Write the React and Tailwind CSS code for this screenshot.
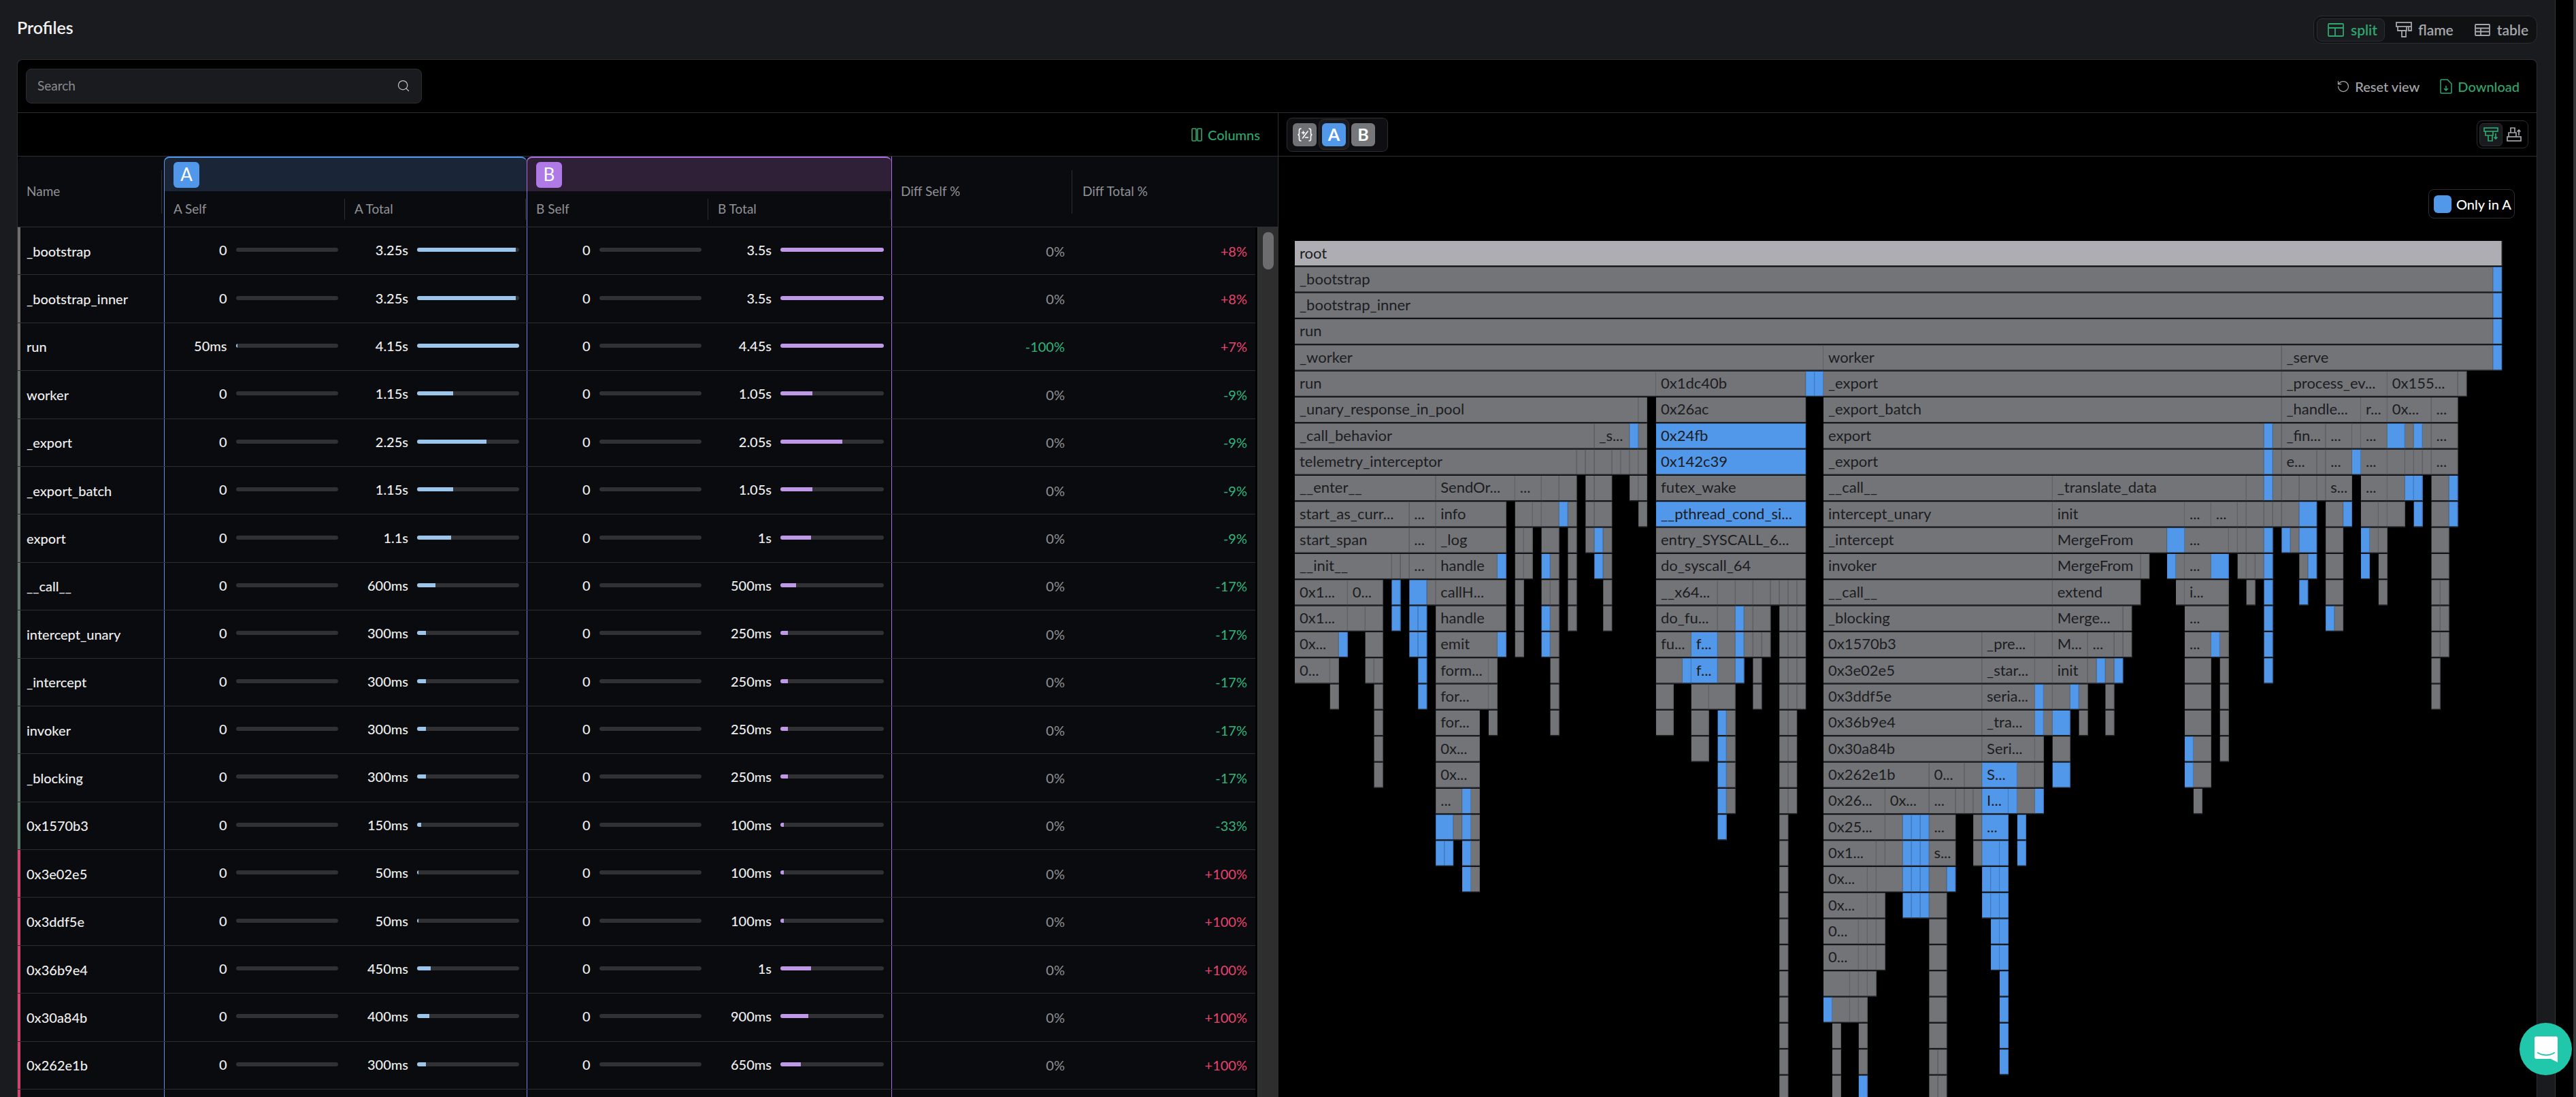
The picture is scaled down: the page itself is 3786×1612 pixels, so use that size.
import { Search, RotateCcw } from 'lucide-react';

const rows = [
  ['_bootstrap', '0', 0, '3.25s', 96.5, '3.5s', 100, '0%', '+8%', '#6f6d6e'],
  ['_bootstrap_inner', '0', 0, '3.25s', 96.5, '3.5s', 100, '0%', '+8%', '#6f6d6e'],
  ['run', '50ms', 1.5, '4.15s', 100, '4.45s', 100, '-100%', '+7%', '#6f6d6e'],
  ['worker', '0', 0, '1.15s', 35, '1.05s', 31, '0%', '-9%', '#69736e'],
  ['_export', '0', 0, '2.25s', 68, '2.05s', 60, '0%', '-9%', '#69736e'],
  ['_export_batch', '0', 0, '1.15s', 35, '1.05s', 31, '0%', '-9%', '#69736e'],
  ['export', '0', 0, '1.1s', 33, '1s', 29.5, '0%', '-9%', '#69736e'],
  ['__call__', '0', 0, '600ms', 18, '500ms', 15, '0%', '-17%', '#657870'],
  ['intercept_unary', '0', 0, '300ms', 8.5, '250ms', 7.5, '0%', '-17%', '#657870'],
  ['_intercept', '0', 0, '300ms', 8.5, '250ms', 7.5, '0%', '-17%', '#657870'],
  ['invoker', '0', 0, '300ms', 8.5, '250ms', 7.5, '0%', '-17%', '#657870'],
  ['_blocking', '0', 0, '300ms', 8.5, '250ms', 7.5, '0%', '-17%', '#657870'],
  ['0x1570b3', '0', 0, '150ms', 4, '100ms', 3.5, '0%', '-33%', '#5f7f70'],
  ['0x3e02e5', '0', 0, '50ms', 1.2, '100ms', 3.5, '0%', '+100%', '#d0456f'],
  ['0x3ddf5e', '0', 0, '50ms', 1.2, '100ms', 3.5, '0%', '+100%', '#d0456f'],
  ['0x36b9e4', '0', 0, '450ms', 13, '1s', 29.5, '0%', '+100%', '#d0456f'],
  ['0x30a84b', '0', 0, '400ms', 12, '900ms', 27, '0%', '+100%', '#d0456f'],
  ['0x262e1b', '0', 0, '300ms', 8.5, '650ms', 20, '0%', '+100%', '#d0456f'],
  ['', '', 0, '', 0, '', 0, '', '', '#d0456f'],
];

// flame rows: [start, end, label, isBlue]
const flame = [
  [[0, 137, 'root']],
  [[0, 136, '_bootstrap'], [136, 137, '', 1]],
  [[0, 136, '_bootstrap_inner'], [136, 137, '', 1]],
  [[0, 136, 'run'], [136, 137, '', 1]],
  [[0, 60, '_worker'], [60, 112, 'worker'], [112, 136, '_serve'], [136, 137, '', 1]],
  [[0, 41, 'run'], [41, 58, '0x1dc40b'], [58, 59, '', 1], [59, 60, '', 1], [60, 112, '_export'], [112, 124, '_process_ev...'], [124, 132, '0x155...'], [132, 133]],
  [[0, 39, '_unary_response_in_pool'], [39, 40], [41, 58, '0x26ac'], [60, 112, '_export_batch'], [112, 121, '_handle...'], [121, 124, 'r...'], [124, 129, '0x...'], [129, 132, '...']],
  [[0, 34, '_call_behavior'], [34, 38, '_s...'], [38, 39, '', 1], [39, 40], [41, 58, '0x24fb', 1], [60, 110, 'export'], [110, 111, '', 1], [111, 112], [112, 117, '_fin...'], [117, 120, '...'], [120, 121], [121, 124, '...'], [124, 126, '', 1], [126, 127], [127, 128, '', 1], [128, 129], [129, 132, '...']],
  [[0, 32, 'telemetry_interceptor'], [32, 33], [33, 34], [34, 36], [36, 37], [37, 38], [38, 39], [39, 40], [41, 58, '0x142c39', 1], [60, 110, '_export'], [110, 111, '', 1], [111, 112], [112, 116, 'e...'], [116, 117], [117, 120, '...'], [120, 121, '', 1], [121, 124, '...'], [124, 126], [126, 127], [127, 128], [128, 129], [129, 132, '...']],
  [[0, 16, '__enter__'], [16, 25, 'SendOr...'], [25, 28, '...'], [28, 30], [30, 32], [33, 34], [34, 36], [38, 39], [39, 40], [41, 58, 'futex_wake'], [60, 86, '__call__'], [86, 108, '_translate_data'], [108, 110], [110, 111, '', 1], [111, 112], [112, 114], [114, 116], [116, 117], [117, 120, 's...'], [121, 124, '...'], [124, 126], [126, 127, '', 1], [127, 128, '', 1], [129, 131], [131, 132, '', 1]],
  [[0, 13, 'start_as_curr...'], [13, 16, '...'], [16, 24, 'info'], [25, 27], [27, 28], [28, 30], [30, 31, '', 1], [31, 32], [33, 34], [34, 36], [39, 40], [41, 58, '__pthread_cond_si...', 1], [60, 86, 'intercept_unary'], [86, 101, 'init'], [101, 104, '...'], [104, 107, '...'], [107, 108], [108, 110], [110, 111], [111, 112], [112, 114], [114, 116, '', 1], [117, 119], [119, 120, '', 1], [121, 123], [123, 124], [124, 126], [127, 128, '', 1], [129, 131], [131, 132, '', 1]],
  [[0, 13, 'start_span'], [13, 16, '...'], [16, 24, '_log'], [25, 26], [26, 27], [28, 30], [31, 32], [33, 34], [34, 35, '', 1], [35, 36], [41, 58, 'entry_SYSCALL_6...'], [60, 86, '_intercept'], [86, 99, 'MergeFrom'], [99, 101, '', 1], [101, 106, '...'], [106, 107], [107, 108], [108, 110], [110, 111, '', 1], [112, 113, '', 1], [113, 114], [114, 116, '', 1], [117, 119], [121, 122, '', 1], [122, 123], [123, 124], [129, 131]],
  [[0, 11, '__init__'], [11, 12], [12, 13], [13, 16, '...'], [16, 23, 'handle'], [23, 24, '', 1], [25, 26], [26, 27], [28, 29, '', 1], [29, 30], [31, 32], [34, 35, '', 1], [35, 36], [41, 58, 'do_syscall_64'], [60, 86, 'invoker'], [86, 96, 'MergeFrom'], [96, 97], [99, 100, '', 1], [100, 101], [101, 104, '...'], [104, 106, '', 1], [107, 108], [108, 109], [109, 110], [110, 111, '', 1], [114, 115], [115, 116, '', 1], [117, 119], [121, 122, '', 1], [123, 124], [129, 131]],
  [[0, 6, '0x1...'], [6, 10, '0...'], [11, 12, '', 1], [13, 15, '', 1], [15, 16], [16, 24, 'callH...'], [25, 26], [28, 29], [29, 30], [31, 32], [35, 36], [41, 48, '__x64...'], [48, 50], [50, 52], [52, 54], [54, 55], [55, 56], [56, 57], [57, 58], [60, 86, '__call__'], [86, 96, 'extend'], [100, 101], [101, 106, 'i...'], [108, 109], [110, 111, '', 1], [114, 115, '', 1], [117, 119], [123, 124], [129, 130], [130, 131]],
  [[0, 6, '0x1...'], [6, 8], [8, 10], [11, 12, '', 1], [13, 14, '', 1], [14, 15, '', 1], [16, 24, 'handle'], [25, 26], [28, 29, '', 1], [29, 30], [31, 32], [35, 36], [41, 48, 'do_fu...'], [48, 50], [50, 51, '', 1], [51, 52], [52, 54], [55, 56], [56, 57], [57, 58], [60, 86, '_blocking'], [86, 94, 'Merge...'], [94, 95], [101, 106, '...'], [110, 111, '', 1], [117, 118, '', 1], [118, 119], [129, 130], [130, 131]],
  [[0, 5, '0x...'], [5, 6, '', 1], [8, 10], [13, 14, '', 1], [14, 15, '', 1], [16, 23, 'emit'], [23, 24, '', 1], [25, 26], [28, 29, '', 1], [29, 30], [41, 45, 'fu...'], [45, 48, 'f...', 1], [48, 50], [50, 51, '', 1], [51, 52], [52, 53], [53, 54], [55, 56], [56, 57], [57, 58], [60, 78, '0x1570b3'], [78, 84, '_pre...'], [84, 86], [86, 90, 'M...'], [90, 93, '...'], [93, 94], [94, 95], [101, 104, '...'], [104, 105, '', 1], [105, 106], [110, 111, '', 1], [129, 130], [130, 131]],
  [[0, 4, '0...'], [4, 5], [8, 9], [9, 10], [14, 15, '', 1], [16, 22, 'form...'], [22, 23], [29, 30], [41, 44], [44, 45, '', 1], [45, 48, 'f...', 1], [48, 50], [50, 51, '', 1], [52, 53], [55, 56], [56, 57], [57, 58], [60, 78, '0x3e02e5'], [78, 84, '_star...'], [84, 86], [86, 90, 'init'], [90, 91], [91, 92, '', 1], [92, 93], [93, 94, '', 1], [101, 104], [105, 106], [110, 111, '', 1], [129, 130]],
  [[4, 5], [9, 10], [14, 15, '', 1], [16, 22, 'for...'], [22, 23], [29, 30], [41, 43], [45, 47], [47, 50], [52, 53], [55, 56], [56, 57], [57, 58], [60, 78, '0x3ddf5e'], [78, 84, 'seria...'], [84, 85, '', 1], [85, 86], [86, 88], [88, 89, '', 1], [89, 90], [92, 93], [101, 104], [105, 106], [129, 130]],
  [[9, 10], [16, 21, 'for...'], [22, 23], [29, 30], [41, 43], [45, 47], [48, 49, '', 1], [49, 50], [55, 56], [56, 57], [60, 78, '0x36b9e4'], [78, 84, '_tra...'], [84, 85, '', 1], [85, 86], [86, 88, '', 1], [89, 90], [92, 93], [101, 104], [105, 106]],
  [[9, 10], [16, 21, '0x...'], [45, 47], [48, 49, '', 1], [49, 50], [55, 56], [56, 57], [60, 78, '0x30a84b'], [78, 84, 'Seri...'], [84, 85], [86, 88], [101, 102, '', 1], [102, 104], [105, 106]],
  [[9, 10], [16, 21, '0x...'], [48, 49, '', 1], [49, 50], [55, 56], [56, 57], [60, 72, '0x262e1b'], [72, 76, '0...'], [76, 78], [78, 82, 'S...', 1], [82, 84], [84, 85], [86, 88, '', 1], [101, 102, '', 1], [102, 104]],
  [[16, 19, '...'], [19, 20, '', 1], [20, 21], [48, 49, '', 1], [49, 50], [55, 56], [56, 57], [60, 67, '0x26...'], [67, 72, '0x...'], [72, 75, '...'], [75, 76], [76, 77], [77, 78], [78, 81, 'I...', 1], [81, 82, '', 1], [82, 84], [84, 85, '', 1], [102, 103]],
  [[16, 18, '', 1], [18, 19], [19, 20, '', 1], [20, 21], [48, 49, '', 1], [55, 56], [60, 67, '0x25...'], [67, 69], [69, 70, '', 1], [70, 71, '', 1], [71, 72, '', 1], [72, 75, '...'], [77, 78], [78, 81, '...', 1], [82, 83, '', 1]],
  [[16, 17, '', 1], [17, 18, '', 1], [19, 20, '', 1], [20, 21], [55, 56], [60, 66, '0x1...'], [66, 67], [67, 69], [69, 70, '', 1], [70, 71, '', 1], [71, 72, '', 1], [72, 75, 's...'], [77, 78], [78, 80, '', 1], [80, 81, '', 1], [82, 83, '', 1]],
  [[19, 20, '', 1], [20, 21], [55, 56], [60, 65, '0x...'], [65, 66], [66, 69], [69, 70, '', 1], [70, 71, '', 1], [71, 72, '', 1], [72, 74], [74, 75, '', 1], [78, 79, '', 1], [79, 80, '', 1], [80, 81, '', 1]],
  [[55, 56], [60, 65, '0x...'], [65, 66], [66, 67], [69, 70, '', 1], [70, 71, '', 1], [71, 72, '', 1], [72, 74], [78, 79, '', 1], [79, 80, '', 1], [80, 81, '', 1]],
  [[55, 56], [60, 64, '0...'], [64, 65], [65, 66], [66, 67], [72, 74], [79, 80, '', 1], [80, 81, '', 1]],
  [[55, 56], [60, 64, '0...'], [64, 65], [65, 66], [66, 67], [72, 74], [79, 80, '', 1], [80, 81, '', 1]],
  [[55, 56], [60, 63], [63, 64], [64, 65], [65, 66], [72, 74], [80, 81, '', 1]],
  [[55, 56], [60, 61, '', 1], [61, 63], [63, 64], [64, 65], [72, 74], [80, 81, '', 1]],
  [[55, 56], [61, 62], [64, 65], [72, 74], [80, 81, '', 1]],
  [[55, 56], [61, 62], [64, 65], [72, 73], [73, 74], [80, 81, '', 1]],
  [[55, 56], [61, 62], [64, 65, '', 1], [72, 73], [73, 74]],
];

const U = 12.95;
const PITCH = 38.33;

function FlameGraph() {
  return (
    <svg width="1780" height="1258" className="block ml-[24px] mt-[33px] shrink-0">
      {flame.map((row, r) =>
        row.map(([s, e, label, blue], i) => {
          const x = s * U;
          const w = (e - s) * U;
          const y = r * PITCH;
          const fill = r === 0 ? '#adadb3' : blue ? '#5197ea' : '#737478';
          return (
            <g key={i}>
              <rect x={x} y={y} width={w} height={37} fill={fill} />
              <rect x={x + w - 1} y={y} width={1} height={37} fill={blue ? '#3f78bd' : '#5f6064'} />
              <rect x={x} y={y + 36} width={w} height={1.5} fill="#232427" />
              {label && (
                <text x={x + 7} y={y + 25.5} fontSize="22" fill="#1c1d20">
                  {label}
                </text>
              )}
            </g>
          );
        })
      )}
    </svg>
  );
}

function Bar({ pct, color, width }) {
  return (
    <div className={`${width} h-[6px] rounded-[3px] bg-[#313133] overflow-hidden shrink-0`}>
      <div className={`h-full ${color}`} style={{ width: `${pct}%` }} />
    </div>
  );
}

function Metric({ value, pct, color, cellWidth, barWidth, pr }) {
  return (
    <div className={`${cellWidth} ${pr} flex items-center justify-end gap-[13px] -mt-[3px]`}>
      <span className="text-[20px] font-medium text-[#eeeeee]">{value}</span>
      {value && <Bar pct={pct} color={color} width={barWidth} />}
    </div>
  );
}

function Row({ row }) {
  const [name, aSelf, aSelfPct, aTotal, aPct, bTotal, bPct, dSelf, dTotal, edge] = row;
  const selfColor = dSelf === '0%' ? 'text-[#8f9094]' : 'text-[#2fb57d]';
  const totalColor = dTotal.startsWith('+') ? 'text-[#e8436e]' : 'text-[#2fb57d]';
  return (
    <div className="flex h-[70.4px] border-b-[1.5px] border-[#2c2e33] bg-[#0a0b0e] shrink-0 w-[1819px]">
      <div className="w-[215px] shrink-0 flex items-center pl-[9px] border-l-4 text-[20px] font-medium text-[#eeeeee]" style={{ borderColor: edge }}>
        {name}
      </div>
      <div className="w-[533px] shrink-0 flex border-l-[1.5px] border-[#4f94e8]">
        <Metric value={aSelf} pct={aSelfPct} color="bg-[#9cc5ec]" cellWidth="w-[265px]" barWidth="w-[150px]" pr="pr-[10px]" />
        <Metric value={aTotal} pct={aPct} color="bg-[#9cc5ec]" cellWidth="w-[268px]" barWidth="w-[150px]" pr="pr-[11px]" />
      </div>
      <div className="w-[536px] shrink-0 flex border-l-[1.5px] border-[#7a7ff0]">
        <Metric value={name ? '0' : ''} pct={0} color="bg-[#c098e8]" cellWidth="w-[266px]" barWidth="w-[150px]" pr="pr-[10px]" />
        <Metric value={bTotal} pct={bPct} color="bg-[#c098e8]" cellWidth="w-[270px]" barWidth="w-[152px]" pr="pr-[11px]" />
      </div>
      <div className={`w-[266px] shrink-0 flex items-center justify-end pr-[11px] border-l-[1.5px] border-[#a86fe0] text-[20px] ${selfColor}`}>
        {dSelf}
      </div>
      <div className={`flex-1 flex items-center justify-end pr-[12px] text-[20px] ${totalColor}`}>{dTotal}</div>
    </div>
  );
}

function GroupHeader({ letter, width, bar, bg, border, badge, a, b, aWidth, bWidth }) {
  return (
    <div className={`${width} shrink-0 flex flex-col`}>
      <div className={`h-[51px] ${bg} border-t-2 border-l-[1.5px] ${border} rounded-tl-lg rounded-tr-lg flex items-center pl-[13px]`}>
        <span className={`w-[38px] h-[38px] rounded-md ${badge} flex items-center justify-center text-white text-[26px]`}>{letter}</span>
      </div>
      <div className={`flex-1 flex items-center border-l-[1.5px] ${bar}`}>
        <div className={`${aWidth} pl-[13px] h-[31px] flex items-center border-r border-[#2c2e33] text-[19px] text-[#909296]`}>{a}</div>
        <div className={`${bWidth} pl-[14px] h-[31px] flex items-center border-r border-[#2c2e33] text-[19px] text-[#909296]`}>{b}</div>
      </div>
    </div>
  );
}

function TableHeader() {
  return (
    <div className="flex h-[104px] border-b-[1.5px] border-[#2c2e33] bg-[#0a0b0e] rounded-tl-lg shrink-0">
      <div className="w-[215px] shrink-0 flex items-center">
        <div className="w-full pl-[13px] h-[64px] flex items-center border-r border-[#2c2e33] mr-[3px] text-[19px] text-[#909296]">Name</div>
      </div>
      <GroupHeader letter="A" width="w-[533px]" bar="border-[#4f94e8]" bg="bg-[#1a2638]" border="border-[#4f94e8]" badge="bg-[#5197ea]" a="A Self" b="A Total" aWidth="w-[265px]" bWidth="w-[266px]" />
      <GroupHeader letter="B" width="w-[536px]" bar="border-[#7a7ff0]" bg="bg-[#2f2038]" border="border-[#a86fe0]" badge="bg-[#b07ae6]" a="B Self" b="B Total" aWidth="w-[266px]" bWidth="w-[268px]" />
      <div className="w-[266px] shrink-0 flex items-center border-l-[1.5px] border-[#a86fe0]">
        <div className="w-full pl-[13px] h-[64px] flex items-center border-r border-[#2c2e33] text-[19px] text-[#909296]">Diff Self %</div>
      </div>
      <div className="flex-1 flex items-center pl-[15px] text-[19px] text-[#909296]">Diff Total %</div>
    </div>
  );
}

function Scrollbar() {
  return (
    <div className="absolute right-0 top-[104px] bottom-0 w-[30px] bg-[#2e2e2f] border-l border-[#3a3a3c] pt-[7px] flex justify-center">
      <div className="w-[16px] h-[55px] rounded-lg bg-[#6d6d6f]" />
    </div>
  );
}

function SplitIcon() {
  return (
    <svg width="24" height="20" viewBox="0 0 24 20" fill="none" stroke="#2fa56f" strokeWidth="1.8">
      <rect x="1" y="1" width="22" height="18" rx="1" />
      <path d="M1 7h22M11 7v12" />
    </svg>
  );
}

function FlameIcon() {
  return (
    <svg width="24" height="24" viewBox="0 0 24 24" fill="none" stroke="#a6a7ab" strokeWidth="1.8">
      <rect x="1" y="1" width="22" height="6" />
      <path d="M3 7v6h13V7M19 7v6h4V7M9 13v9h6v-9" />
    </svg>
  );
}

function TableIcon() {
  return (
    <svg width="23" height="18" viewBox="0 0 23 18" fill="none" stroke="#a6a7ab" strokeWidth="1.8">
      <rect x="1" y="1" width="21" height="16" rx="1" />
      <path d="M1 6.5h21M1 11.5h21M9 6.5V17" />
    </svg>
  );
}

function ColumnsIcon() {
  return (
    <svg width="16" height="20" viewBox="0 0 16 20" fill="none" stroke="#2fa56f" strokeWidth="1.6">
      <rect x="1" y="1" width="6" height="18" rx="1" />
      <rect x="9" y="1" width="6" height="18" rx="1" />
    </svg>
  );
}

function DownloadIcon() {
  return (
    <svg width="18" height="22" viewBox="0 0 18 22" fill="none" stroke="#2fa56f" strokeWidth="1.5">
      <path d="M11 1H2a1 1 0 0 0-1 1v18a1 1 0 0 0 1 1h14a1 1 0 0 0 1-1V7l-6-6Z" />
      <path d="M9 10v7M6 14l3 3 3-3" />
    </svg>
  );
}

function FlameDownIcon() {
  return (
    <svg width="22" height="21" viewBox="0 0 22 21" fill="none" stroke="#2fa56f" strokeWidth="1.7">
      <rect x="1" y="1" width="20" height="5" />
      <path d="M3 6v6h11V6M7 12v8h6v-8M18 9v8M15.5 14.5 18 17l2.5-2.5" />
    </svg>
  );
}

function FlameUpIcon() {
  return (
    <svg width="22" height="21" viewBox="0 0 22 21" fill="none" stroke="#a6a7ab" strokeWidth="1.7">
      <rect x="1" y="14" width="20" height="6" />
      <path d="M3 14V8h11v6M6 8V1h6v7M18 12V4M15.5 6.5 18 4l2.5 2.5" />
    </svg>
  );
}

function DiffIcon() {
  return (
    <svg width="24" height="24" viewBox="0 0 24 24" fill="none" stroke="#ffffff" strokeWidth="1.6" strokeLinecap="round">
      <path d="M6 3c-2 0-2.5 1-2.5 2.5v4c0 1.500-.8 2.500-2 2.500 1.200 0 2 1 2 2.500v4c0 1.500.5 2.500 2.500 2.500" />
      <path d="M18 3c2 0 2.500 1 2.500 2.500v4c0 1.500.8 2.500 2 2.500-1.200 0-2 1-2 2.500v4c0 1.500-.5 2.500-2.500 2.500" />
      <path d="M7.500 9h4M9.500 7v4M16 7l-7.500 10M12.500 16h4" />
    </svg>
  );
}

function ChatIcon() {
  return (
    <svg width="34" height="38" viewBox="0 0 34 38" fill="#ffffff">
      <path d="M3 0h28a3 3 0 0 1 3 3v35l-10-5H3a3 3 0 0 1-3-3V3a3 3 0 0 1 3-3Z" />
      <path d="M5 24c7 4.500 17 4.500 24 0" fill="none" stroke="#20c7ab" strokeWidth="2" strokeLinecap="round" />
    </svg>
  );
}

function ViewSwitch() {
  return (
    <div className="flex items-center h-[41px] w-[329px] rounded-xl border border-[#2c2e33] bg-[#101113] px-[4px] text-[21px] font-semibold">
      <div className="w-[100px] h-[34px] rounded-lg border border-[#2c2e33] bg-[#1a1b1e] flex items-center gap-[10px] pl-[15px] text-[#2fa56f]">
        <SplitIcon />
        split
      </div>
      <div className="flex items-center gap-[9px] ml-[16px] text-[#a6a7ab]">
        <FlameIcon />
        flame
      </div>
      <div className="flex items-center gap-[10px] ml-[31px] text-[#a6a7ab]">
        <TableIcon />
        table
      </div>
    </div>
  );
}

export default function App() {
  return (
    <div className="w-[3786px] h-[1612px] overflow-hidden flex bg-black relative [font-family:Lato,sans-serif]">
      <div className="w-[3756px] shrink-0 h-full bg-[#1a1b1e] border-r border-[#36373b] flex flex-col">
        <div className="h-[87px] shrink-0 flex justify-between pl-[25px] pr-[26px] pt-[23px]">
          <span className="text-[25px] font-semibold text-[#f1f1f1] leading-[34px]">Profiles</span>
          <ViewSwitch />
        </div>
        <div className="ml-[25px] mr-[26px] flex-1 min-h-0 bg-black border border-[#2c2e33] border-b-0 rounded-t-lg flex flex-col overflow-hidden">
          <div className="h-[78px] shrink-0 border-b border-[#2c2e33] flex items-center justify-between pl-[12px] pr-[25px]">
            <div className="w-[582px] h-[51px] rounded-lg border border-[#2c2e33] bg-[#1a1b1e] flex items-center justify-between px-[16px] -mt-[1px]">
              <span className="text-[19px] text-[#8a8b8f]">Search</span>
              <Search size={20} strokeWidth={1.5} color="#c1c2c5" />
            </div>
            <div className="flex items-center text-[20px] font-medium">
              <div className="flex items-center gap-[7px] text-[#a6a7ab]">
                <RotateCcw size={20} strokeWidth={1.5} color="#a6a7ab" />
                Reset view
              </div>
              <div className="flex items-center gap-[8px] ml-[30px] text-[#2fa56f]">
                <DownloadIcon />
                Download
              </div>
            </div>
          </div>
          <div className="flex flex-1 min-h-0">
            <div className="w-[1853px] shrink-0 flex flex-col border-r border-[#2c2e33] relative">
              <div className="h-[64px] shrink-0 border-b border-[#2c2e33] flex items-center justify-end gap-[8px] pr-[26px] text-[20px] font-medium text-[#2fa56f]">
                <ColumnsIcon />
                Columns
              </div>
              <TableHeader />
              <div className="flex-1 min-h-0 overflow-hidden relative">
                {rows.map((row, i) => (
                  <Row key={i} row={row} />
                ))}
              </div>
              <div className="absolute inset-x-0 top-[64px] bottom-0 pointer-events-none">
                <Scrollbar />
              </div>
            </div>
            <div className="flex-1 min-w-0 flex flex-col">
              <div className="h-[64px] shrink-0 border-b border-[#2c2e33] flex items-center justify-between pl-[12px] pr-[12px]">
                <div className="w-[149px] h-[50px] rounded-lg border border-[#2c2e33] bg-[#0f0f11] flex items-center px-[8px]">
                  <div className="w-[35px] h-[34px] rounded-md bg-[#707175] flex items-center justify-center">
                    <DiffIcon />
                  </div>
                  <div className="w-[45px] h-[45px] ml-[3px] rounded-lg border border-[#2c2e33] bg-[#1a1b1e] flex items-center justify-center">
                    <div className="w-[35px] h-[34px] rounded-md bg-[#5197ea] flex items-center justify-center text-white text-[25px] font-bold">A</div>
                  </div>
                  <div className="w-[35px] h-[34px] ml-[3px] rounded-md bg-[#76777b] flex items-center justify-center text-white text-[25px] font-bold">B</div>
                </div>
                <div className="w-[76px] h-[41px] rounded-lg border border-[#2c2e33] flex items-center px-[3px]">
                  <div className="w-[34px] h-[34px] rounded-md border border-[#2c2e33] bg-[#1a1b1e] flex items-center justify-center">
                    <FlameDownIcon />
                  </div>
                  <div className="ml-[6px]">
                    <FlameUpIcon />
                  </div>
                </div>
              </div>
              <div className="flex justify-end pt-[48px] pr-[32px] shrink-0">
                <div className="h-[43px] w-[127px] rounded-lg border border-[#2c2e33] flex items-center gap-[7px] pl-[7px] text-[20px] font-medium text-white">
                  <span className="w-[26px] h-[26px] rounded-md bg-[#5197ea]" />
                  Only in A
                </div>
              </div>
              <FlameGraph />
            </div>
          </div>
        </div>
      </div>
      <div className="flex-1 flex">
        <div className="w-[26px] h-full bg-black" />
        <div className="flex-1 h-full bg-[#36373b]" />
      </div>
      <div className="absolute left-[3703px] top-[1503px] w-[77px] h-[77px] rounded-full bg-[#20c7ab] flex items-center justify-center">
        <ChatIcon />
      </div>
    </div>
  );
}
